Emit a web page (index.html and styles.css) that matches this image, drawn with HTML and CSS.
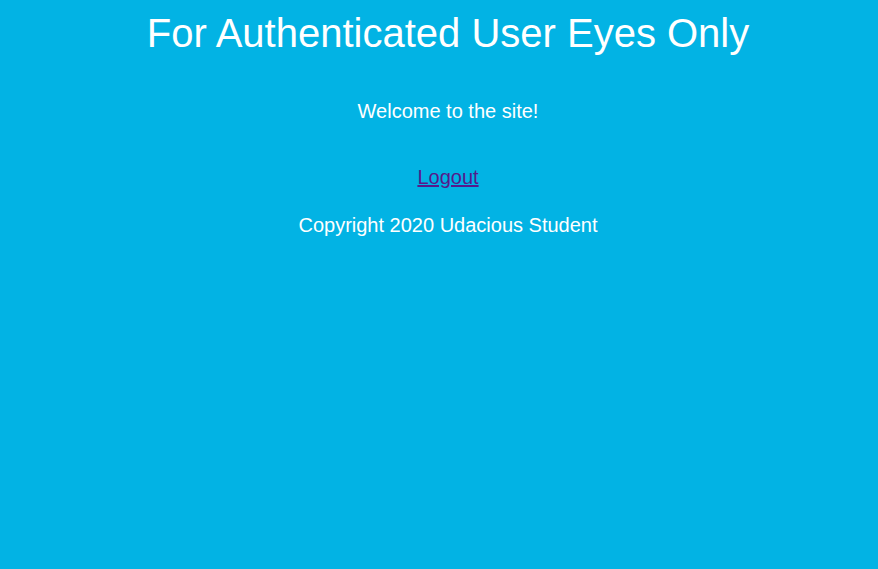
FILE: index.html
```html
<!DOCTYPE html>
<html>
<head>
<meta charset="utf-8">
<link rel="stylesheet" href="styles.css">
</head>
<body>
<div class="page">
  <h1 class="title">For Authenticated User Eyes Only</h1>
  <p class="welcome">Welcome to the site!</p>
  <p class="logout"><a href="#" class="link">Logout</a></p>
  <p class="copy">Copyright 2020 Udacious Student</p>
</div>
</body>
</html>
```
FILE: styles.css
```css
html, body {
  margin: 0;
  padding: 0;
  background: #02b3e4;
  height: 100%;
}
.page {
  padding-left: 18px;
  text-align: center;
  color: #ffffff;
  font-family: "Liberation Sans", Arial, sans-serif;
}
.title {
  font-size: 40px;
  font-weight: normal;
  margin: 0;
  padding-top: 10px;
  line-height: 46px;
}
.welcome {
  font-size: 20px;
  margin: 43px 0 0;
  line-height: 24px;
}
.logout {
  font-size: 20px;
  margin: 42px 0 0;
  line-height: 24px;
}
.link {
  color: #551a8b;
}
.copy {
  font-size: 20px;
  margin: 24px 0 0;
  line-height: 24px;
}
```
